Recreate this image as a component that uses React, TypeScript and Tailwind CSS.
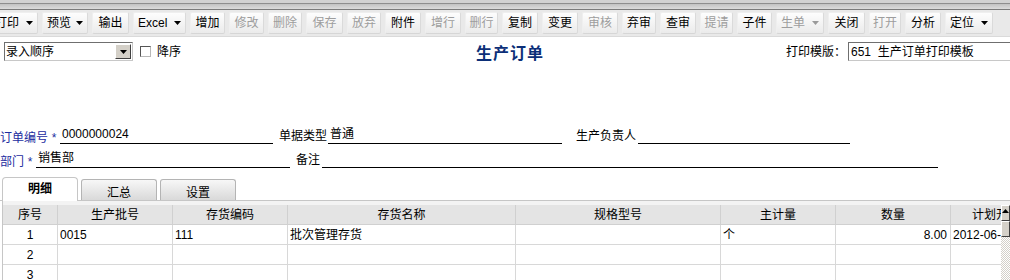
import React from 'react';

type Btn = { label: string; w: string; off?: boolean; drop?: boolean };

const buttons: Btn[] = [
  { label: '打印', w: 'w-[48px]', drop: true },
  { label: '预览', w: 'w-[46px]', drop: true },
  { label: '输出', w: 'w-[37px]' },
  { label: 'Excel', w: 'w-[53px]', drop: true },
  { label: '增加', w: 'w-[35px]' },
  { label: '修改', w: 'w-[35px]', off: true },
  { label: '删除', w: 'w-[34px]', off: true },
  { label: '保存', w: 'w-[37px]', off: true },
  { label: '放弃', w: 'w-[34px]', off: true },
  { label: '附件', w: 'w-[36px]' },
  { label: '增行', w: 'w-[36px]', off: true },
  { label: '删行', w: 'w-[33px]', off: true },
  { label: '复制', w: 'w-[36px]' },
  { label: '变更', w: 'w-[36px]' },
  { label: '审核', w: 'w-[36px]', off: true },
  { label: '弃审', w: 'w-[34px]' },
  { label: '查审', w: 'w-[36px]' },
  { label: '提请', w: 'w-[33px]', off: true },
  { label: '子件', w: 'w-[35px]' },
  { label: '生单', w: 'w-[48px]', off: true, drop: true },
  { label: '关闭', w: 'w-[37px]' },
  { label: '打开', w: 'w-[32px]', off: true },
  { label: '分析', w: 'w-[36px]' },
  { label: '定位', w: 'w-[48px]', drop: true },
];

const cols = ['序号', '生产批号', '存货编码', '存货名称', '规格型号', '主计量', '数量', '计划开工日期'];

const rows: string[][] = [
  ['1', '0015', '111', '批次管理存货', '', '个', '8.00', '2012-06-01'],
  ['2', '', '', '', '', '', '', ''],
  ['3', '', '', '', '', '', '', ''],
];

const Arrow = ({ off }: { off?: boolean }) => (
  <svg width="7" height="4" viewBox="0 0 7 4" className="flex-none">
    <path d="M0 0h7L3.5 4z" fill={off ? '#9a9a9a' : '#000'} />
  </svg>
);

const Toolbar = () => (
  <div className="h-[37px] bg-[#e9e9e9] border-b border-[#dadada]">
    <div className="h-[3px] bg-[#d2d2d2]" />
    <div className="h-px bg-[#8e8e8e]" />
    <div className="h-[5px] bg-gradient-to-b from-[#c2c2c2] to-[#dcdcdc]" />
    <div className="h-px bg-[#7b7b7b]" />
    <div className="flex gap-[4px] pt-[2px] -ml-[10px]">
      {buttons.map((b) => (
        <div
          key={b.label}
          className={`${b.w} h-[22px] flex-none flex items-center rounded-[2px] border border-[#efefef] border-b-[#d6d6d6] border-r-[#dadada] bg-gradient-to-b from-[#fdfdfd] to-[#ebebeb] ${b.drop ? 'justify-between pl-[4px] pr-[4px]' : 'justify-center'} ${b.off ? 'text-[#9d9d9d]' : 'text-black'}`}
        >
          <span>{b.label}</span>
          {b.drop && <Arrow off={b.off} />}
        </div>
      ))}
    </div>
  </div>
);

const Field = ({ w, value }: { w: string; value?: string }) => (
  <div className={`${w} h-[17px] flex-none border-b-[1.5px] border-black pl-[2px] leading-[15px]`}>{value}</div>
);

export default function App() {
  return (
    <div className="w-[1010px] h-[280px] overflow-hidden bg-white text-[12px] leading-none text-black font-['Liberation_Sans','Noto_Sans_CJK_SC',sans-serif]">
      <Toolbar />

      {/* 排序 / 标题 / 打印模版 */}
      <div className="flex items-center mt-[5px] h-[19px]">
        <div className="w-[476px] flex-none flex items-center">
          <div className="ml-[4px] w-[129px] h-[19px] flex items-center justify-between border border-[#6f6f6f] border-r-[#c8c8c8] border-b-[#c8c8c8] pl-[1px] pr-[1px]">
            <span>录入顺序</span>
            <div className="w-[16px] h-[15px] flex items-center justify-center bg-[#d4d0c8] border border-t-white border-l-white border-r-[#404040] border-b-[#404040]">
              <Arrow />
            </div>
          </div>
          <div className="ml-[7px] w-[11px] h-[11px] border border-[#555] border-r-[#b8b8b8] border-b-[#b8b8b8] bg-white" />
          <span className="ml-[6px]">降序</span>
        </div>
        <div className="mt-[4px] text-[16px] font-bold text-[#0c2f78] tracking-[1px]">生产订单</div>
        <div className="ml-auto flex items-center flex-none">
          <span>打印模版：</span>
          <div className="ml-[2px] w-[162px] h-[19px] flex items-center border border-r-0 border-[#6f6f6f] border-b-[#c8c8c8] pl-[2px] whitespace-nowrap">651&nbsp; 生产订单打印模板</div>
        </div>
      </div>

      {/* 表头字段 */}
      <div className="mt-[65px] flex flex-col gap-[6px]">
        <div className="flex items-end h-[18px]">
          <span className="w-[48px] text-[#1c2ca0]">订单编号</span>
          <span className="w-[12px] text-center text-[#1c2ca0]">*</span>
          <Field w="w-[213px]" value="0000000024" />
          <span className="ml-[6px] w-[48px] mb-[2px]">单据类型</span>
          <div className="ml-[1px]" />
          <Field w="w-[234px]" value="普通" />
          <span className="ml-[14px] w-[60px] mb-[2px]">生产负责人</span>
          <div className="ml-[2px]" />
          <Field w="w-[212px]" />
        </div>
        <div className="flex items-end h-[18px]">
          <span className="w-[24px] text-[#1c2ca0]">部门</span>
          <span className="w-[12px] text-center text-[#1c2ca0]">*</span>
          <Field w="w-[254px]" value="销售部" />
          <span className="ml-[6px] w-[24px] mb-[2px]">备注</span>
          <div className="ml-[2px]" />
          <Field w="w-[616px]" />
        </div>
      </div>

      {/* 页签 */}
      <div className="mt-[9px] flex items-end h-[24px] pl-[2px] gap-[3px] border-b border-[#c6c6c6]">
        <div className="w-[76px] h-[24px] -mb-px bg-white border border-b-0 border-[#c6c6c6] rounded-t-[4px] flex justify-center pt-[5px] font-bold">明细</div>
        <div className="w-[76px] h-[21px] bg-gradient-to-b from-[#f7f7f7] to-[#d9d9d9] border border-b-0 border-[#b4b4b4] rounded-t-[3px] flex justify-center pt-[7px]">汇总</div>
        <div className="w-[76px] h-[21px] bg-gradient-to-b from-[#f7f7f7] to-[#d9d9d9] border border-b-0 border-[#b4b4b4] rounded-t-[3px] flex justify-center pt-[7px]">设置</div>
      </div>

      {/* 表体 */}
      <div className="ml-[2px] border-l border-[#c6c6c6] bg-[#f3f3f3] pt-[4px] flex">
        <div className="w-[998px] flex-none overflow-hidden">
          <div className="grid grid-cols-[55px_115px_115px_228px_205px_115px_115px_115px] w-max">
            {cols.map((c) => (
              <div key={c} className="h-[20px] flex items-center justify-center bg-[#e4e4e4] border-r border-b border-[#d0d0d0] whitespace-nowrap">
                {c}
              </div>
            ))}
            {rows.map((r) =>
              r.map((v, i) => (
                <div
                  key={`${r[0]}-${i}`}
                  className={`h-[20px] flex items-center bg-white border-r border-b border-[#d8d8d8] whitespace-nowrap ${i === 0 ? 'justify-center' : i === 6 ? 'justify-end pr-[3px]' : 'pl-[2px]'}`}
                >
                  {v}
                </div>
              ))
            )}
          </div>
        </div>
        <div className="w-[9px] flex-none flex flex-col [background:repeating-conic-gradient(#ffffff_0_25%,#d4d0c8_0_50%)_0_0/2px_2px]">
          <div className="h-[16px] bg-[#d4d0c8] border border-t-white border-l-white border-r-[#404040] border-b-[#404040] flex justify-center pt-[3px]">
            <svg width="7" height="4" viewBox="0 0 7 4">
              <path d="M3.5 0L7 4H0z" fill="#000" />
            </svg>
          </div>
          <div className="h-[16px] bg-[#d4d0c8] border border-t-white border-l-white border-r-[#404040] border-b-[#404040]" />
        </div>
      </div>
    </div>
  );
}
